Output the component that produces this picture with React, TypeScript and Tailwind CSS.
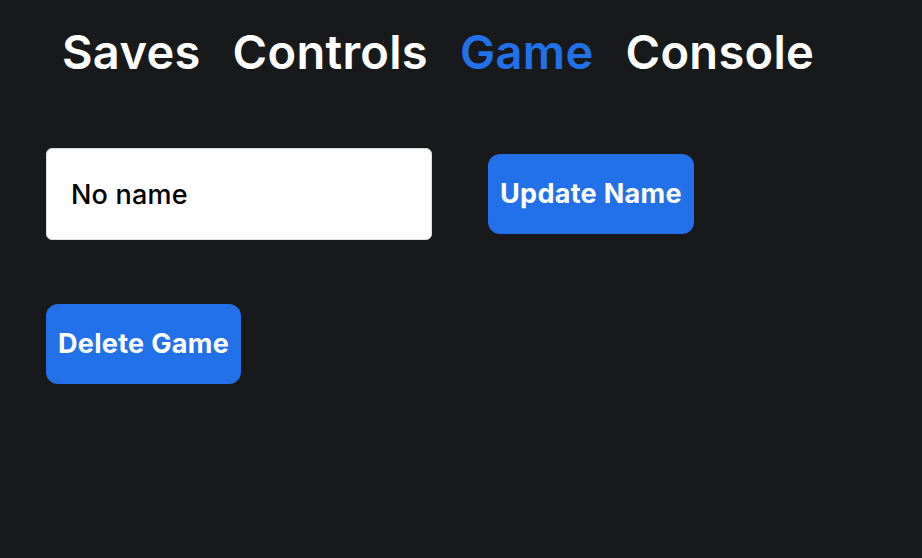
import React, { useState } from 'react';

const tabs = ['Saves', 'Controls', 'Game', 'Console'];

export default function App() {
  const [active, setActive] = useState('Game');
  const [name, setName] = useState('No name');

  return (
    <div
      className="min-h-screen w-full bg-[#18191b] text-white"
      style={{ fontFamily: 'Inter, "Noto Sans", sans-serif' }}
    >
      {/* Tabs */}
      <nav className="flex pl-[46px] pt-[22px]">
        {tabs.map((t) => (
          <button
            key={t}
            onClick={() => setActive(t)}
            className={`px-4 text-[47px] leading-[60px] font-semibold tracking-[0.3px] ${
              active === t ? 'text-[#2371e9]' : 'text-white'
            }`}
          >
            {t}
          </button>
        ))}
      </nav>

      <div className="flex flex-col gap-16 px-[46px] pt-[66px]">
        <div className="flex items-center gap-14">
          <input
            value={name}
            onChange={(e) => setName(e.target.value)}
            className="h-[92px] w-[386px] rounded-md border border-[#dcdcdc] bg-[#fdfdfd] px-6 text-[27px] font-medium tracking-[0.2px] text-black outline-none"
          />
          <button className="h-20 rounded-xl bg-[#2371e9] px-3 text-[27px] font-bold tracking-[0.3px] text-white">
            Update Name
          </button>
        </div>

        <div>
          <button className="h-20 rounded-xl bg-[#2371e9] px-3 text-[27px] font-bold tracking-[0.3px] text-white">
            Delete Game
          </button>
        </div>
      </div>
    </div>
  );
}
